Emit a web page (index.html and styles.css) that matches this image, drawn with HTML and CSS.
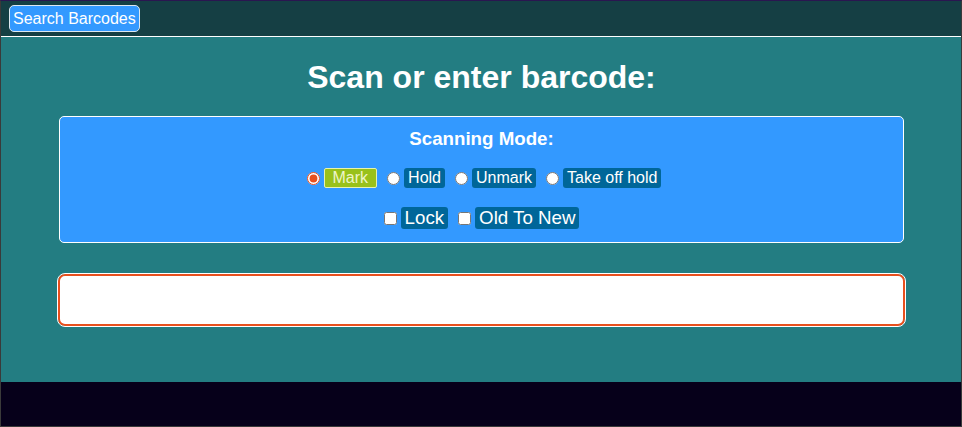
FILE: index.html
```html
<!DOCTYPE html>
<html>
<head>
<meta charset="utf-8">
<link rel="stylesheet" href="styles.css">
</head>
<body>
<div class="frame">
  <header class="topbar">
    <button class="search-btn">Search Barcodes</button>
  </header>
  <main class="main">
    <h1 class="title">Scan or enter barcode:</h1>
    <section class="mode-box">
      <h3 class="mode-title">Scanning Mode:</h3>
      <div class="radio-row">
        <label class="opt"><input type="radio" name="mode" checked><span class="tag tag-active">Mark</span></label>
        <label class="opt"><input type="radio" name="mode"><span class="tag">Hold</span></label>
        <label class="opt"><input type="radio" name="mode"><span class="tag">Unmark</span></label>
        <label class="opt"><input type="radio" name="mode"><span class="tag">Take off hold</span></label>
      </div>
      <div class="check-row">
        <label class="opt"><input type="checkbox"><span class="tag tag-big">Lock</span></label>
        <label class="opt"><input type="checkbox"><span class="tag tag-big">Old To New</span></label>
      </div>
    </section>
    <input class="barcode" type="text">
  </main>
  <footer class="footer"></footer>
</div>
</body>
</html>
```
FILE: styles.css
```css
html, body {
  margin: 0;
  padding: 0;
  background: #06001a;
  font-family: "Liberation Sans", Arial, sans-serif;
}
.frame {
  width: 962px;
  height: 427px;
  box-sizing: border-box;
  border-top: 1px solid #2a1650;
  border-left: 1px solid #3a3a3a;
  border-right: 1px solid #3a3a3a;
  border-bottom: 1px solid #3a3a3a;
  display: flex;
  flex-direction: column;
  background: #06001a;
}
.topbar {
  height: 36px;
  box-sizing: border-box;
  background: #153f44;
  border-bottom: 1px solid #ffffff;
  display: flex;
  align-items: flex-start;
  padding-left: 8px;
  padding-top: 4px;
}
.search-btn {
  font-family: "Liberation Sans", Arial, sans-serif;
  font-size: 16px;
  color: #ffffff;
  background: #3399ff;
  border: 1px solid #dde8f0;
  border-radius: 5px;
  padding: 3px 3px;
  line-height: 19px;
  margin: 0;
}
.main {
  background: #237d82;
  height: 345px;
  box-sizing: border-box;
  padding: 22px 56px 0 58px;
  display: flex;
  flex-direction: column;
}
.title {
  margin: 0 0 0 -1px;
  text-align: center;
  color: #ffffff;
  font-size: 32px;
  font-weight: bold;
  line-height: 37px;
}
.mode-box {
  margin: 20px 1px 0 0;
  background: #3399ff;
  border: 1px solid #ffffff;
  border-radius: 5px;
  padding: 11px 0 13px;
  display: flex;
  flex-direction: column;
  align-items: center;
}
.mode-title {
  margin: 0;
  color: #ffffff;
  font-size: 18.72px;
  font-weight: bold;
  line-height: 22px;
}
.radio-row {
  display: flex;
  gap: 10px;
  margin-top: 18px;
  margin-left: 5px;
}
.check-row {
  display: flex;
  gap: 10px;
  margin-top: 19px;
  margin-left: 0;
}
.opt {
  display: flex;
  align-items: center;
  gap: 4px;
}
.opt input {
  margin: 0;
  width: 13px;
  height: 13px;
  accent-color: #e8501e;
}
.check-row .opt {
  gap: 4px;
}
.tag {
  background: #006699;
  color: #ffffff;
  font-size: 16px;
  line-height: 20px;
  padding: 0 4px;
  border-radius: 3px;
}
.tag-active {
  background: #99c11a;
  color: #eef5c8;
  border: 1px solid #e6f2b0;
  line-height: 18px;
  padding: 0 8px;
  border-radius: 2px;
}
.tag-big {
  font-size: 18.72px;
  line-height: 22px;
  padding: 0 4px;
}
.barcode {
  margin: 31px 0 0 -1px;
  height: 52px;
  box-sizing: border-box;
  border: 2px solid #e8501e;
  border-radius: 7px;
  outline: 1px solid #ffffff;
  outline-offset: 0;
  background: #ffffff;
  font-size: 18px;
}
.footer {
  flex: 1;
  background: #06001a;
}
```
